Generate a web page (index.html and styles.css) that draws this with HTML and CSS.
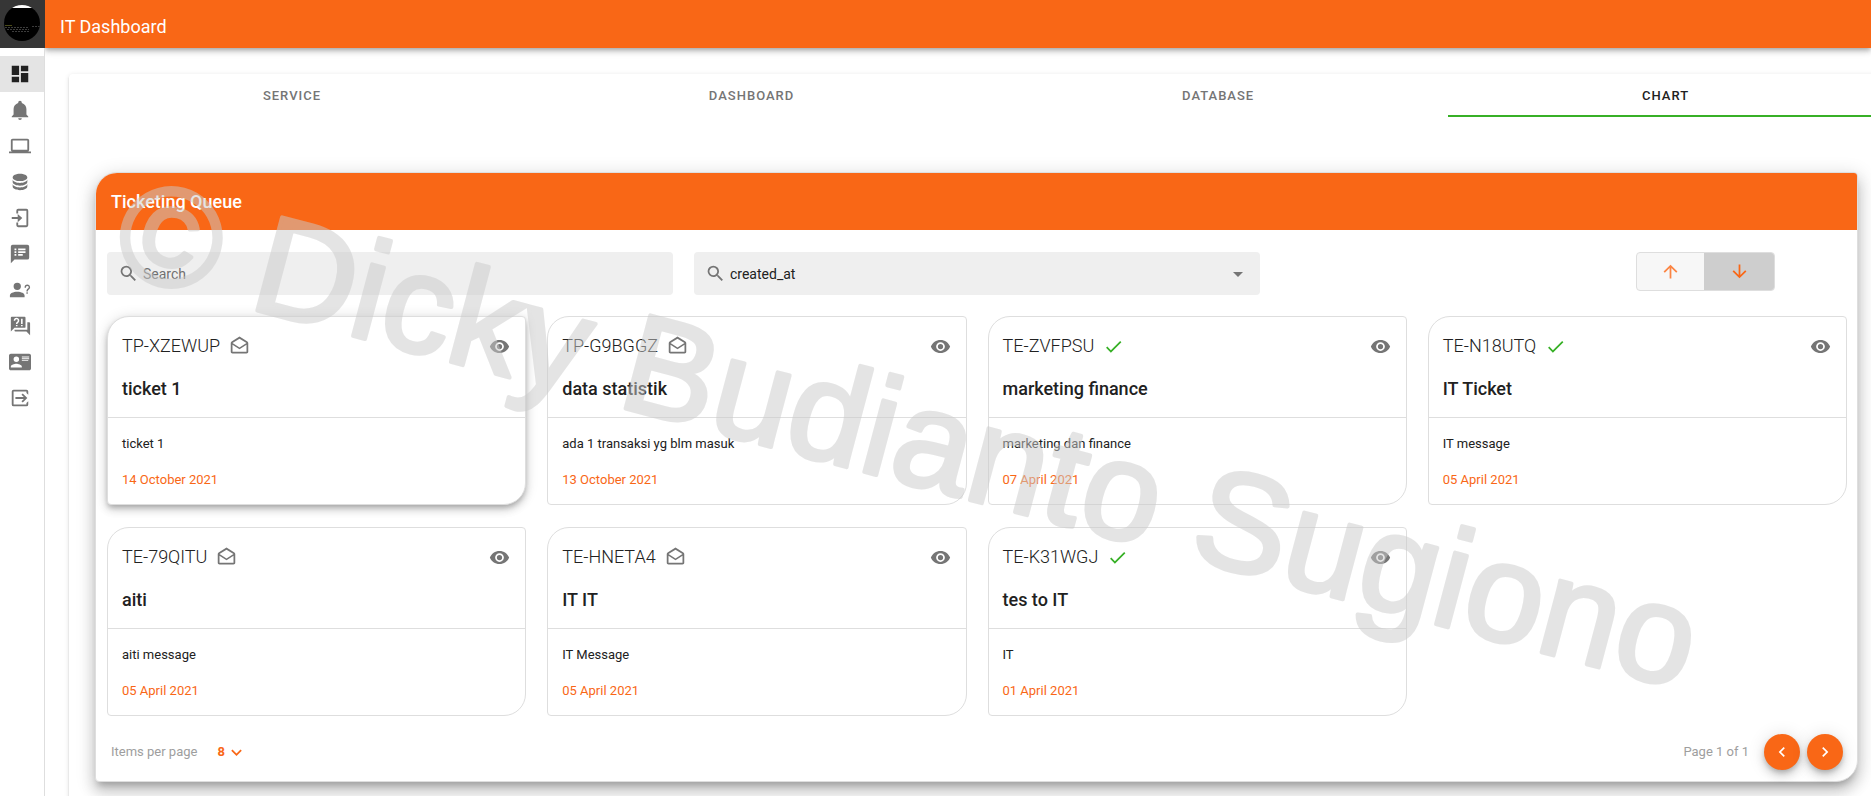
FILE: index.html
```html
<!DOCTYPE html>
<html lang="en">
<head>
<meta charset="utf-8">
<meta name="viewport" content="width=device-width, initial-scale=1">
<title>IT Dashboard</title>
<link rel="stylesheet" href="styles.css">
</head>
<body>
<svg class="sprite" aria-hidden="true">
  <symbol id="i-mail" viewBox="0 0 24 24"><path d="M21.03 6.29L12 .64 2.97 6.29C2.39 6.64 2 7.27 2 8V18C2 19.1 2.9 20 4 20H20C21.1 20 22 19.1 22 18V8C22 7.27 21.61 6.64 21.03 6.29M20 18H4V10L12 15L20 10V18M12 13L4 8L12 3L20 8L12 13Z"/></symbol>
  <symbol id="i-check" viewBox="0 0 24 24"><path d="M21,7L9,19L3.5,13.5L4.91,12.09L9,16.17L19.59,5.59L21,7Z"/></symbol>
  <symbol id="i-eye" viewBox="0 0 24 24"><path d="M12,9A3,3 0 0,0 9,12A3,3 0 0,0 12,15A3,3 0 0,0 15,12A3,3 0 0,0 12,9M12,17A5,5 0 0,1 7,12A5,5 0 0,1 12,7A5,5 0 0,1 17,12A5,5 0 0,1 12,17M12,4.5C7,4.5 2.73,7.61 1,12C2.73,16.39 7,19.5 12,19.5C17,19.5 21.27,16.39 23,12C21.27,7.61 17,4.5 12,4.5Z"/></symbol>
  <symbol id="i-magnify" viewBox="0 0 24 24"><path d="M9.5,3A6.5,6.5 0 0,1 16,9.5C16,11.11 15.41,12.59 14.44,13.73L14.71,14H15.5L20.5,19L19,20.5L14,15.5V14.71L13.73,14.44C12.59,15.41 11.11,16 9.5,16A6.5,6.5 0 0,1 3,9.5A6.5,6.5 0 0,1 9.5,3M9.5,5C7,5 5,7 5,9.5C5,12 7,14 9.5,14C12,14 14,12 14,9.5C14,7 12,5 9.5,5Z"/></symbol>
</svg>

<div class="app">
  <aside class="sidebar">
    <div class="brand">
      <svg class="avatar" viewBox="0 0 36 36" role="img" aria-label="Profile">
        <clipPath id="round"><circle cx="18" cy="18" r="18"/></clipPath>
        <g clip-path="url(#round)">
          <path fill="#000" d="M0 0h36v36H0z"/>
          <path fill="#fff" d="M0 0h36v3H0z"/>
          <path stroke="#4a4a18" d="M1 20.500h7"/>
          <path stroke="#3c3c3c" stroke-dasharray="2 1" d="M1 22.500h24M28 21.500h8M3 24.500h22M8 26.500h18"/>
        </g>
      </svg>
    </div>
    <nav class="nav" aria-label="Main">
      <a class="nav-item active" href="#" aria-label="Dashboard"><svg viewBox="0 0 24 24"><path d="M13,3V9H21V3M13,21H21V11H13M3,21H11V15H3M3,13H11V3H3V13Z"/></svg></a>
      <a class="nav-item" href="#" aria-label="Notifications"><svg viewBox="0 0 24 24"><path d="M21,19V20H3V19L5,17V11C5,7.9 7.03,5.17 10,4.29C10,4.19 10,4.1 10,4A2,2 0 0,1 12,2A2,2 0 0,1 14,4C14,4.1 14,4.19 14,4.29C16.97,5.17 19,7.9 19,11V17L21,19M14,21A2,2 0 0,1 12,23A2,2 0 0,1 10,21"/></svg></a>
      <a class="nav-item" href="#" aria-label="Devices"><svg viewBox="0 0 24 24"><path d="M4,6H20V16H4M20,18A2,2 0 0,0 22,16V6C22,4.89 21.1,4 20,4H4C2.89,4 2,4.89 2,6V16A2,2 0 0,0 4,18H0V20H24V18H20Z"/></svg></a>
      <a class="nav-item" href="#" aria-label="Database"><svg viewBox="0 0 24 24"><path d="M12,3C7.58,3 4,4.79 4,7C4,9.21 7.58,11 12,11C16.42,11 20,9.21 20,7C20,4.79 16.42,3 12,3M4,9V12C4,14.21 7.58,16 12,16C16.42,16 20,14.21 20,12V9C20,11.21 16.42,13 12,13C7.58,13 4,11.21 4,9M4,14V17C4,19.21 7.58,21 12,21C16.42,21 20,19.21 20,17V14C20,16.21 16.42,18 12,18C7.58,18 4,16.21 4,14Z"/></svg></a>
      <a class="nav-item" href="#" aria-label="Check in"><svg viewBox="0 0 24 24"><path d="M10,2H19A2,2 0 0,1 21,4V20A2,2 0 0,1 19,22H10A2,2 0 0,1 8,20V17H10V20H19V4H10V7H8V4A2,2 0 0,1 10,2M9.500,7.500L14.500,12L9.500,16.500V13.200H3V10.800H9.500Z"/></svg></a>
      <a class="nav-item" href="#" aria-label="Messages"><svg viewBox="0 0 24 24"><path d="M20,2H4A2,2 0 0,0 2,4V22L6,18H20A2,2 0 0,0 22,16V4C22,2.89 21.1,2 20,2M8,14H6V12H8V14M8,11H6V9H8V11M8,8H6V6H8V8M15,14H10V12H15V14M18,11H10V9H18V11M18,8H10V6H18V8Z"/></svg></a>
      <a class="nav-item" href="#" aria-label="Support users"><svg viewBox="0 0 24 24"><path d="M13,8A4,4 0 0,1 9,12A4,4 0 0,1 5,8A4,4 0 0,1 9,4A4,4 0 0,1 13,8M17,18V20H1V18C1,15.79 4.58,14 9,14C13.42,14 17,15.79 17,18M20.5,14.5V16H19V14.5H20.5M18.5,9.5H17V9A3,3 0 0,1 20,6C21.66,6 23,7.34 23,9C23,9.97 22.5,10.88 21.71,11.41L21.41,11.6C20.84,12 20.5,12.61 20.5,13.3V13.5H19V13.3C19,12.11 19.6,11 20.59,10.35L20.88,10.16C21.27,9.9 21.5,9.47 21.5,9A1.5,1.5 0 0,0 20,7.5A1.5,1.5 0 0,0 18.5,9V9.5Z"/></svg></a>
      <a class="nav-item" href="#" aria-label="Frequently asked questions"><svg viewBox="0 0 24 24"><path d="M3,2H17A1,1 0 0,1 18,3V13A1,1 0 0,1 17,14H6L2,18V3A1,1 0 0,1 3,2M20,8H22A1,1 0 0,1 23,9V22L19,18H7A1,1 0 0,1 6,17V16H20Z"/><path fill="none" stroke="#fff" stroke-width="1.700" d="M6,6.300A2.200,2.200 0 1,1 9.600,7.700Q8.400,8.500 8.400,9.700M8.400,10.800V12.400M14,4V9.700M14,10.800V12.400"/></svg></a>
      <a class="nav-item" href="#" aria-label="Contacts"><svg viewBox="0 0 24 24"><path d="M2,3H22C23.05,3 24,3.95 24,5V19C24,20.05 23.05,21 22,21H2C0.95,21 0,20.05 0,19V5C0,3.95 0.95,3 2,3M14,6V7H22V6H14M14,8V9H21.5L22,9V8H14M14,10V11H21V10H14M8,13.91C6,13.91 2,15 2,17V18H14V17C14,15 10,13.91 8,13.91M8,6A3,3 0 0,0 5,9A3,3 0 0,0 8,12A3,3 0 0,0 11,9A3,3 0 0,0 8,6Z"/></svg></a>
      <a class="nav-item" href="#" aria-label="Log out"><svg viewBox="0 0 24 24"><path d="M5,3H19A2,2 0 0,1 21,5V8.500L19,6.500V5H5V19H19V17.500L21,15.500V19A2,2 0 0,1 19,21H5A2,2 0 0,1 3,19V5A2,2 0 0,1 5,3M15,7L20,12L15,17L13.600,15.600L16.200,13H7V11H16.200L13.600,8.400Z"/></svg></a>
    </nav>
  </aside>

  <div class="page">
    <header class="topbar"><h1>IT Dashboard</h1></header>
    <main class="panel">
      <div class="tabs" role="tablist">
        <button class="tab" role="tab" aria-selected="false">SERVICE</button>
        <button class="tab" role="tab" aria-selected="false">DASHBOARD</button>
        <button class="tab" role="tab" aria-selected="false">DATABASE</button>
        <button class="tab selected" role="tab" aria-selected="true">CHART</button>
      </div>

      <section class="queue">
        <h2 class="queue-head">Ticketing Queue</h2>
        <div class="filters">
          <label class="field">
            <svg class="icon"><use href="#i-magnify"/></svg>
            <input type="text" placeholder="Search" aria-label="Search">
          </label>
          <label class="field">
            <svg class="icon"><use href="#i-magnify"/></svg>
            <select aria-label="Sort by"><option>created_at</option></select>
            <svg class="caret" viewBox="0 0 24 24"><path d="M7,10L12,15L17,10H7Z"/></svg>
          </label>
          <div class="order">
            <div class="toggle">
              <button aria-label="Ascending"><svg class="icon" viewBox="0 0 24 24"><path d="M13,20H11V8L5.5,13.5L4.08,12.08L12,4.16L19.92,12.08L18.5,13.5L13,8V20Z"/></svg></button>
              <button class="on" aria-label="Descending"><svg class="icon" viewBox="0 0 24 24"><path d="M11,4H13V16L18.5,10.5L19.92,11.92L12,19.84L4.08,11.92L5.5,10.5L11,16V4Z"/></svg></button>
            </div>
          </div>
        </div>

        <div class="cards">
          <article class="ticket raised">
            <div class="ticket-head">
              <div class="code"><span>TP-XZEWUP</span><svg class="icon"><use href="#i-mail"/></svg><button class="view" aria-label="View"><svg class="icon"><use href="#i-eye"/></svg></button></div>
              <h3>ticket 1</h3>
            </div>
            <div class="ticket-body"><p>ticket 1</p><time>14 October 2021</time></div>
          </article>
          <article class="ticket">
            <div class="ticket-head">
              <div class="code"><span>TP-G9BGGZ</span><svg class="icon"><use href="#i-mail"/></svg><button class="view" aria-label="View"><svg class="icon"><use href="#i-eye"/></svg></button></div>
              <h3>data statistik</h3>
            </div>
            <div class="ticket-body"><p>ada 1 transaksi yg blm masuk</p><time>13 October 2021</time></div>
          </article>
          <article class="ticket">
            <div class="ticket-head">
              <div class="code"><span>TE-ZVFPSU</span><svg class="icon done"><use href="#i-check"/></svg><button class="view" aria-label="View"><svg class="icon"><use href="#i-eye"/></svg></button></div>
              <h3>marketing finance</h3>
            </div>
            <div class="ticket-body"><p>marketing dan finance</p><time>07 April 2021</time></div>
          </article>
          <article class="ticket">
            <div class="ticket-head">
              <div class="code"><span>TE-N18UTQ</span><svg class="icon done"><use href="#i-check"/></svg><button class="view" aria-label="View"><svg class="icon"><use href="#i-eye"/></svg></button></div>
              <h3>IT Ticket</h3>
            </div>
            <div class="ticket-body"><p>IT message</p><time>05 April 2021</time></div>
          </article>
          <article class="ticket">
            <div class="ticket-head">
              <div class="code"><span>TE-79QITU</span><svg class="icon"><use href="#i-mail"/></svg><button class="view" aria-label="View"><svg class="icon"><use href="#i-eye"/></svg></button></div>
              <h3>aiti</h3>
            </div>
            <div class="ticket-body"><p>aiti message</p><time>05 April 2021</time></div>
          </article>
          <article class="ticket">
            <div class="ticket-head">
              <div class="code"><span>TE-HNETA4</span><svg class="icon"><use href="#i-mail"/></svg><button class="view" aria-label="View"><svg class="icon"><use href="#i-eye"/></svg></button></div>
              <h3>IT IT</h3>
            </div>
            <div class="ticket-body"><p>IT Message</p><time>05 April 2021</time></div>
          </article>
          <article class="ticket">
            <div class="ticket-head">
              <div class="code"><span>TE-K31WGJ</span><svg class="icon done"><use href="#i-check"/></svg><button class="view" aria-label="View"><svg class="icon"><use href="#i-eye"/></svg></button></div>
              <h3>tes to IT</h3>
            </div>
            <div class="ticket-body"><p>IT</p><time>01 April 2021</time></div>
          </article>
        </div>

        <footer class="pager">
          <span>Items per page</span>
          <button class="per-page">8<svg viewBox="0 0 24 24"><path d="M7.41,8.58L12,13.17L16.59,8.58L18,10L12,16L6,10L7.41,8.58Z"/></svg></button>
          <span class="page-count">Page 1 of 1</span>
          <button class="round" aria-label="Previous page"><svg viewBox="0 0 24 24"><path d="M15.41,16.58L10.83,12L15.41,7.41L14,6L8,12L14,18L15.41,16.58Z"/></svg></button>
          <button class="round" aria-label="Next page"><svg viewBox="0 0 24 24"><path d="M8.59,16.58L13.17,12L8.59,7.41L10,6L16,12L10,18L8.59,16.58Z"/></svg></button>
        </footer>
      </section>
    </main>
  </div>

  <svg class="watermark"><text transform="translate(109 271) rotate(14.9)">© Dicky Budianto Sugiono</text></svg>
</div>
</body>
</html>
```
FILE: styles.css
```css
:root {
  --orange: #f96716;
  --green: #37b026;
  --grey: #757575;
  --line: #dedede;
}
* { box-sizing: border-box; }
body {
  margin: 0;
  font-family: Roboto, "Liberation Sans", sans-serif;
  font-size: 13px;
  line-height: 20px;
  color: #212121;
  background: #fff;
}
h1, h2, h3, p { margin: 0; }
button, input, select { font: inherit; color: inherit; border: 0; padding: 0; background: none; }
button { cursor: pointer; }
svg { fill: currentColor; display: block; flex: none; }
.sprite { display: none; }
.icon { width: 21px; height: 21px; color: var(--grey); }

.app { display: flex; position: relative; height: 100vh; overflow: hidden; }

.sidebar { width: 45px; flex: none; border-right: 1px solid var(--line); }
.brand { height: 48px; margin-right: -1px; padding: 5px 4px; background: #363636; }
.avatar { width: 36px; height: 36px; fill: none; }
.nav { padding-top: 8px; }
.nav-item { display: flex; align-items: center; height: 36px; padding-left: 9px; color: var(--grey); }
.nav-item svg { width: 22px; height: 22px; }
.nav-item.active { background: #e4e4e4; color: #212121; }

.page { flex: 1; min-width: 0; }
.topbar {
  height: 48px;
  padding: 5px 15px 0;
  background: var(--orange);
  color: #fff;
  box-shadow: 0 2px 4px -1px rgba(0,0,0,.2), 0 4px 5px rgba(0,0,0,.14), 0 1px 10px rgba(0,0,0,.12);
  clip-path: inset(0 0 -20px 0);
}
.topbar h1 { font-size: 18px; line-height: 43px; font-weight: 400; }

.panel {
  margin: 26px -12px 0 24px;
  padding-bottom: 26px;
  border-radius: 4px;
  box-shadow: 0 3px 1px -2px rgba(0,0,0,.2), 0 2px 2px rgba(0,0,0,.14), 0 1px 5px rgba(0,0,0,.12);
}
.tabs { display: flex; height: 43px; }
.tab {
  flex: 1 1 auto;
  padding: 2px 16px 0;
  font-weight: 500;
  letter-spacing: 1px;
  color: var(--grey);
  border-bottom: 2px solid transparent;
}
.tab.selected { color: #212121; border-bottom-color: var(--green); }

.queue {
  margin: 55px 25px 0 26px;
  border: 1px solid var(--line);
  border-radius: 22px 4px 22px 4px;
  background: #fff;
  box-shadow: 0 6px 6px -3px rgba(0,0,0,.2), 0 10px 14px 1px rgba(0,0,0,.14), 0 4px 18px 3px rgba(0,0,0,.12);
}
.queue-head {
  padding: 0 15px;
  font-size: 18px;
  line-height: 57px;
  font-weight: 500;
  color: #fff;
  background: var(--orange);
  border-radius: 21px 3px 0 0;
}
.filters { display: grid; grid-template-columns: repeat(3, 1fr); gap: 21px; padding: 22px 10px 21px 11px; }
.field {
  display: flex;
  align-items: center;
  gap: 4px;
  height: 43px;
  padding: 0 10px 0 11px;
  border-radius: 4px;
  background: #efefef;
}
.field input, .field select { flex: 1; min-width: 0; font-size: 14px; outline: 0; appearance: none; }
.field input::placeholder { color: #6f6f6f; opacity: 1; }
.caret { width: 24px; height: 24px; color: var(--grey); }
.order { display: flex; width: 50%; margin-left: auto; justify-content: center; align-items: flex-start; }
.toggle { display: flex; height: 39px; border: 1px solid var(--line); border-radius: 4px; background: #f7f7f7; overflow: hidden; }
.toggle button { width: 67px; display: grid; place-items: center; }
.toggle .icon { color: #fb8544; }
.toggle .on { width: 70px; background: #cecece; }
.toggle .on .icon { color: var(--orange); }

.cards { display: grid; grid-template-columns: repeat(4, 1fr); gap: 22px 21px; padding: 0 10px 0 11px; }
.ticket { border: 1px solid var(--line); border-radius: 22px 4px; background: #fff; }
.ticket.raised { box-shadow: 0 3px 5px -1px rgba(0,0,0,.2), 0 5px 8px rgba(0,0,0,.14), 0 1px 14px rgba(0,0,0,.12); }
.ticket-head { height: 101px; padding: 13px 15px 0 14px; border-bottom: 1px solid var(--line); }
.code { display: flex; align-items: center; gap: 9px; font-size: 18px; line-height: 32px; font-weight: 300; }
.code .done { color: var(--green); }
.view { margin-left: auto; }
.ticket-head h3 { margin-top: 11px; font-size: 18px; line-height: 32px; font-weight: 500; }
.ticket-body { padding: 16px 14px 14px; }
.ticket-body p { margin-bottom: 16px; }
.ticket-body time { display: block; color: var(--orange); }

.pager { display: flex; align-items: center; padding: 18px 14px 11px 15px; color: #9e9e9e; }
.per-page { display: flex; align-items: center; gap: 1px; margin-left: 20px; font-weight: 700; color: var(--orange); }
.per-page svg { width: 21px; height: 21px; }
.page-count { margin-left: auto; margin-right: 8px; }
.round {
  display: grid;
  place-items: center;
  width: 36px;
  height: 36px;
  margin-left: 7px;
  border-radius: 50%;
  background: var(--orange);
  color: #fff;
  box-shadow: 0 3px 5px -1px rgba(0,0,0,.2), 0 6px 10px rgba(0,0,0,.14), 0 1px 18px rgba(0,0,0,.12);
}
.round svg { width: 20px; height: 20px; }

.watermark { position: absolute; inset: 0; width: 100%; height: 100%; pointer-events: none; }
.watermark text {
  font-family: "Liberation Sans", Arial, sans-serif;
  font-size: 140px;
  fill: #cbcbcb;
  stroke: #cbcbcb;
  stroke-width: 4px;
  stroke-linejoin: round;
  opacity: .5;
}
```
